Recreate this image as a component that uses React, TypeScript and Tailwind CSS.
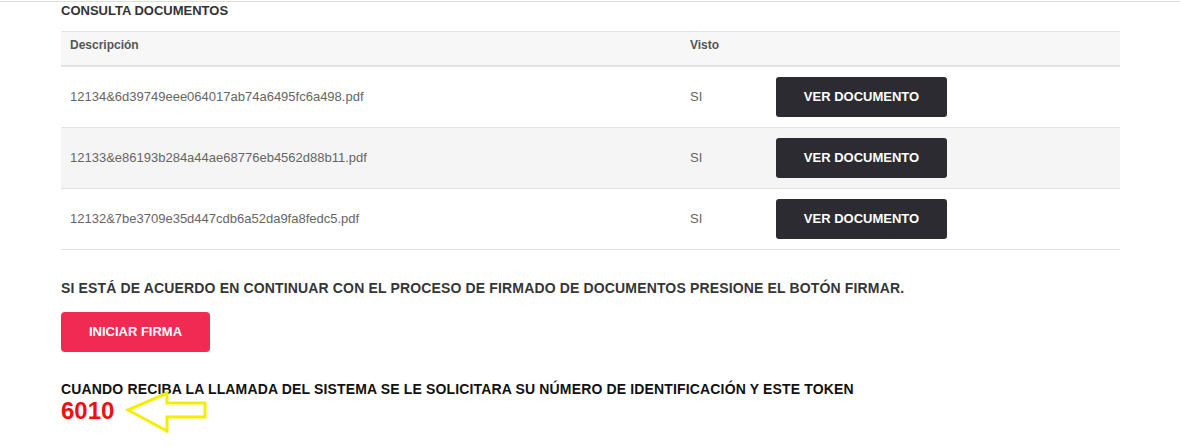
const docs = [
  { name: '12134&6d39749eee064017ab74a6495fc6a498.pdf', visto: 'SI' },
  { name: '12133&e86193b284a44ae68776eb4562d88b11.pdf', visto: 'SI' },
  { name: '12132&7be3709e35d447cdb6a52da9fa8fedc5.pdf', visto: 'SI' },
]

export default function App() {
  return (
    <div className="min-h-[448px] bg-white font-['Liberation_Sans',Arial,sans-serif]">
      <div className="mt-px h-px bg-[#dedede]" />

      <div className="w-[1120px] pl-[61px]">
        <h2 className="mb-[11px] text-[13px] font-bold leading-[18px] text-[#333]">CONSULTA DOCUMENTOS</h2>

        <table className="w-full border-collapse">
          <thead>
            <tr className="bg-[#f7f7f7]">
              <th className="w-[620px] border-t border-b-2 border-[#e2e2e2] px-[9px] pt-[5px] pb-[11px] text-left align-top text-[12px] font-bold leading-[17px] text-[#555]">
                Descripción
              </th>
              <th className="w-[86px] border-t border-b-2 border-[#e2e2e2] px-[9px] pt-[5px] pb-[11px] text-left align-top text-[12px] font-bold leading-[17px] text-[#555]">
                Visto
              </th>
              <th className="border-t border-b-2 border-[#e2e2e2] px-[9px] pt-[5px] pb-[11px]" />
            </tr>
          </thead>
          <tbody>
            {docs.map((d, i) => (
              <tr key={d.name} className={i % 2 === 1 ? 'bg-[#f5f5f5]' : 'bg-white'}>
                <td className="border-b border-[#e2e2e2] px-[9px] py-[10px] align-middle text-[13px] leading-[18px] text-[#666]">
                  {d.name}
                </td>
                <td className="border-b border-[#e2e2e2] px-[9px] py-[10px] align-middle text-[13px] leading-[18px] text-[#666]">
                  {d.visto}
                </td>
                <td className="border-b border-[#e2e2e2] px-[9px] py-[10px] align-middle">
                  <button className="flex h-[40px] w-[171px] items-center justify-center rounded-[3px] bg-[#2c2b31] text-[13px] font-bold text-white">
                    VER DOCUMENTO
                  </button>
                </td>
              </tr>
            ))}
          </tbody>
        </table>

        <p className="mt-[28px] text-[14px] font-bold leading-[20px] tracking-[0.15px] text-[#363636]">
          SI ESTÁ DE ACUERDO EN CONTINUAR CON EL PROCESO DE FIRMADO DE DOCUMENTOS PRESIONE EL BOTÓN FIRMAR.
        </p>

        <button className="mt-[14px] flex h-[40px] w-[149px] items-center justify-center rounded-[4px] bg-[#f12a53] text-[13px] font-bold text-white">
          INICIAR FIRMA
        </button>

        <div className="relative mt-[28px]">
          <p className="text-[14px] font-bold leading-[18px] tracking-[0.15px] text-[#111]">
            CUANDO RECIBA LA LLAMADA DEL SISTEMA SE LE SOLICITARA SU NÚMERO DE IDENTIFICACIÓN Y ESTE TOKEN
          </p>
          <p className="mt-px text-[24px] font-bold leading-[24px] text-[#ee1111]">6010</p>
          <svg
            className="absolute left-[64px] top-[10px]"
            width="84"
            height="44"
            viewBox="0 0 84 44"
            fill="none"
          >
            <polygon
              points="3,20 42,3 42,13 80,13 80,27 42,27 42,41"
              stroke="#f6ee00"
              strokeWidth="3"
              strokeLinejoin="miter"
            />
          </svg>
        </div>
      </div>
    </div>
  )
}
